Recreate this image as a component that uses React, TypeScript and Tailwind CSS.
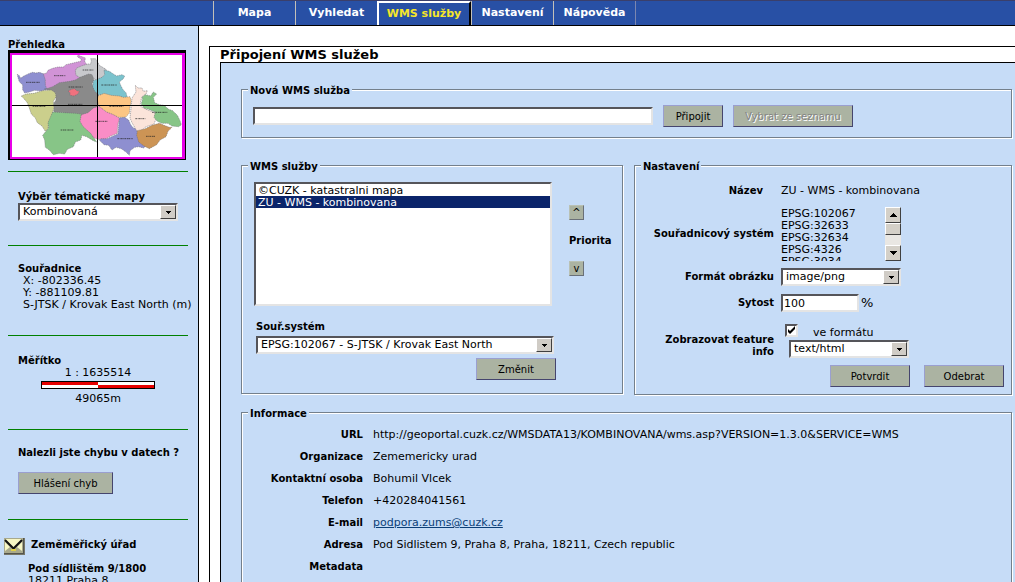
import { useState } from "react";
import type { ReactNode } from "react";
import { clsx } from "clsx";

const TABS = ["Mapa", "Vyhledat", "WMS služby", "Nastavení", "Nápověda"];

const SERVICES = ["©CUZK - katastralni mapa", "ZU - WMS - kombinovana"];

const SYSTEMS = [
  "EPSG:102067",
  "EPSG:32633",
  "EPSG:32634",
  "EPSG:4326",
  "EPSG:3034",
];

const INFO: { label: string; value: string; href?: string }[] = [
  {
    label: "URL",
    value:
      "http://geoportal.cuzk.cz/WMSDATA13/KOMBINOVANA/wms.asp?VERSION=1.3.0&SERVICE=WMS",
  },
  { label: "Organizace", value: "Zememericky urad" },
  { label: "Kontaktní osoba", value: "Bohumil Vlcek" },
  { label: "Telefon", value: "+420284041561" },
  {
    label: "E-mail",
    value: "podpora.zums@cuzk.cz",
    href: "mailto:podpora.zums@cuzk.cz",
  },
  {
    label: "Adresa",
    value: "Pod Sidlistem 9, Praha 8, Praha, 18211, Czech republic",
  },
  { label: "Metadata", value: "" },
];

const REGIONS = [
  { fill: "#8e8fd0", d: "M52 133l6 4 4 8 8-6 16-8 12-4 10 2 10-2 16 6 8 6-6 16 4 10 4 12-20 6-20-2-16 5-14 3-6-10 0-14-10-10-4-12z" },
  { fill: "#d193d6", d: "M130 132l10-3 4-8 14-6 16-4 16 0 8-7 18-4 16-4 10-2 2-6-12-8 2-4 12 4 10 4-2 12 6 6-4 8-14 12-4 12 2 12-8 8-18 4-18 0-16 10-12 2-12 7-14 3-6-14 0-16z" },
  { fill: "#c8c9cc", d: "M230 114l14-6 18-6 10 0 2-10-2-6 14 0 6 8 6 12 10 6 10 6 4 14-2 12-14 4-16 4-8-6-8-12-14 4-18 6-14-8-2-14z" },
  { fill: "#8a8a8a", d: "M134 178l24-8 20-12 32-4 16-4 14-8 26-10 10 2 6 16-6 12 8 14 10 8 2 14-2 30-10 10-2 12-18 0-18 6-26-4-32-4-26 0-2-26 8-12-2-18-8-8-24-8z" },
  { fill: "#7bc3cd", d: "M280 152l26-10 8-8-2-14 16 4 12 8 10 6 16-4 8 4-4 8-12 10 4 10 6 12 10 10 4 16-8 2-12-6-24 0-22-6-20 0-12-10-6-14z" },
  { fill: "#cbcf8c", d: "M64 198l14-6 24-2 26-8 26-2 12 8 2 12-8 14 2 20-4 12-2 22-10 12-2 16-8 8-10-16-14-10-6-14-12-12-6-18-6-16-10-12z" },
  { fill: "#87c587", d: "M158 246l34 2 34 2 18 2 0 16 4 14 14 10 10 14 10 18 8 12-10-4-20-12-14-4-4 14-16 6-6 14-18 8-8 14-16-2-18 4-12-14-12-8-2-22-6-14 18-22-2-16z" },
  { fill: "#fa8dc6", d: "M244 254l20-6 16-14 18-6 16 14 32 14 14 10-6 14-2 18 0 12-20 8-16 10-20 0-14-4-10-14-14-12-10-10-8-14z" },
  { fill: "#fcc684", d: "M294 198l18-8 22 6 24 2 12 4 20-2 4 14-4 16-2 20-12 12-20 0-20-10-16-6-24-18-4-18z" },
  { fill: "#8e8fd0", d: "M358 264l16-2 12 8 6 14 8 10 12 4 2 20 6 12 10 8 12 8-12 8-14-4-12 2-14 10-2 14-10-10-14-10-16-4-12 8-10-14-14-2-14-14 6-4 18 0 18-8 14-6 2-24z" },
  { fill: "#fbe4da", d: "M406 166l8 8 12 0 4 10 12-2-4 10-12 8-4 14-2 14 18 10 16 6 12 6 2 16-6 16-24 8-16 14-10 2-8-14-8-14-6-14 2-18 2-22 2-20 12-18z" },
  { fill: "#87c587", d: "M426 202l10-8 16 4 8-12 10 6-10 10 4 16 14 6 14 2 14 12 12 4 14 14 8 16 4 12-8 6-20-2-12-8-18 0-14-6-10-12 4-16-20-8-14-4-8-12 4-16z" },
  { fill: "#cc9455", d: "M412 302l24-6 20-10 22-6 14 6 16 6 8 0-12 12-6 16-18 10-10 14-22 12-16-8-16-12-6-20z" },
  { fill: "#f0717e", d: "M204 184l10-6 10-2 6 6 8 2-4 8-12 6-12-2 0-8z" },
];

// caption strips of the map regions: x, y, length
const CAPTIONS = [
  [78, 157, 42],
  [162, 137, 34],
  [248, 120, 32],
  [206, 171, 42],
  [204, 223, 44],
  [304, 165, 46],
  [98, 229, 38],
  [182, 300, 38],
  [286, 274, 36],
  [328, 229, 42],
  [352, 326, 46],
  [406, 266, 30],
  [456, 247, 46],
  [438, 319, 28],
];

const OverviewMap = () => {
  return (
    <svg
      width="178"
      height="110"
      viewBox="24 60 534 330"
      className="block"
      role="img"
      aria-label="Přehledka"
    >
      <rect x="24" y="60" width="534" height="330" fill="#000" />
      <rect x="30" y="69" width="525" height="318" fill="#e800e8" />
      <rect x="36" y="75" width="510" height="306" fill="#fff" />
      {REGIONS.map((region, index) => (
        <path
          key={index}
          d={region.d}
          fill={region.fill}
          stroke="#6b6b70"
          strokeWidth="1.5"
          strokeDasharray="4 2"
        />
      ))}
      {CAPTIONS.map(([x, y, length]) => (
        <path
          key={`${x}-${y}`}
          d={`M${x} ${y}h${length}`}
          stroke="#222"
          strokeOpacity="0.7"
          strokeWidth="3"
          strokeDasharray="5 2 3 1"
        />
      ))}
      <path d="M292.5 75v306M36 226.5h510" stroke="#000" strokeWidth="3" />
    </svg>
  );
};

const Button = ({
  children,
  className,
  disabled,
}: {
  children: ReactNode;
  className?: string;
  disabled?: boolean;
}) => {
  return (
    <button
      type="button"
      disabled={disabled}
      className={clsx(
        "h-[22px] shrink-0 border border-t-[#9a9fd0] border-r-[#45456e] border-b-[#45456e] border-l-[#9a9fd0] bg-[#abb3a2] pt-px text-center text-[10px] leading-[12px] whitespace-nowrap",
        disabled && "text-[#848484] [text-shadow:1px_1px_0_#fff]",
        className
      )}
    >
      {children}
    </button>
  );
};

const Dropdown = ({
  id,
  value,
  className,
}: {
  id: string;
  value: string;
  className?: string;
}) => {
  return (
    <div
      className={clsx(
        "relative h-[18px] border-2 border-t-[#55555a] border-r-[#e4e4e4] border-b-[#e4e4e4] border-l-[#55555a] bg-white",
        className
      )}
    >
      <select
        id={id}
        className="block h-[14px] w-full appearance-none bg-transparent pl-[3px] text-[11px] leading-[14px] outline-none"
      >
        <option>{value}</option>
      </select>
      <span className="pointer-events-none absolute top-0 right-0 flex h-[14px] w-4 items-center justify-center border border-t-white border-r-[#404040] border-b-[#404040] border-l-white bg-[#d0ccc6]">
        <svg width="5" height="3" viewBox="0 0 5 3" aria-hidden="true">
          <path d="M0 0h5v1H0zM1 1h3v1H1zM2 2h1v1H2z" fill="#000" />
        </svg>
      </span>
    </div>
  );
};

const Group = ({
  title,
  className,
  children,
}: {
  title: string;
  className?: string;
  children: ReactNode;
}) => {
  return (
    <fieldset
      className={clsx(
        "min-w-0 border border-[#74808c] shadow-[1px_1px_0_#fff,inset_1px_1px_0_#fff]",
        className
      )}
    >
      <legend className="ml-[6px] bg-[#c6dcf7] px-[2px] pt-1 text-[10px] leading-[10px] font-bold">
        {title}
      </legend>
      {children}
    </fieldset>
  );
};

const ScrollButton = ({ up }: { up?: boolean }) => {
  return (
    <button
      type="button"
      aria-label={up ? "Nahoru" : "Dolů"}
      className="flex h-4 w-4 items-center justify-center border border-t-white border-r-[#404040] border-b-[#404040] border-l-white bg-[#d4d0c8]"
    >
      <svg width="7" height="4" viewBox="0 0 7 4" aria-hidden="true">
        <path
          d={
            up
              ? "M3 0h1v1H3zM2 1h3v1H2zM1 2h5v1H1zM0 3h7v1H0z"
              : "M0 0h7v1H0zM1 1h5v1H1zM2 2h3v1H2zM3 3h1v1H3z"
          }
          fill="#000"
        />
      </svg>
    </button>
  );
};

const Sidebar = () => {
  return (
    <aside className="w-[199px] shrink-0 overflow-hidden border-r border-black bg-[#c6dcf7] pt-[13px] pr-[10px] pl-2 leading-[12px] whitespace-nowrap">
      <h2 className="text-[10px] leading-[11px] font-bold">Přehledka</h2>
      <OverviewMap />

      <section className="mt-[11px] border-t border-t-[#008000] px-[10px] pt-[19px] pb-6">
        <label htmlFor="theme" className="block text-[10px] font-bold">
          Výběr tématické mapy
        </label>
        <Dropdown id="theme" value="Kombinovaná" />
      </section>

      <section className="border-t border-t-[#008000] pt-[17px] pb-6 pl-[10px]">
        <h2 className="text-[10px] font-bold">Souřadnice</h2>
        <div className="pl-[5px]">
          <p>X: -802336.45</p>
          <p>Y: -881109.81</p>
          <p>S-JTSK / Krovak East North (m)</p>
        </div>
      </section>

      <section className="border-t border-t-[#008000] px-[10px] pt-[19px] pb-6">
        <h2 className="text-[10px] font-bold">Měřítko</h2>
        <p className="text-center">1 : 1635514</p>
        <div className="mx-auto mt-[2px] mb-1 grid h-2 w-[114px] grid-cols-2 border border-black bg-white">
          <span className="mb-[3px] bg-[#e60000]" />
          <span className="mt-[3px] bg-[#e60000]" />
        </div>
        <p className="text-center">49065m</p>
      </section>

      <section className="border-t border-t-[#008000] px-[10px] pt-[17px] pb-[25px]">
        <h2 className="mb-[13px] text-[10px] font-bold">
          Nalezli jste chybu v datech ?
        </h2>
        <Button className="block w-[95px]">Hlášení chyb</Button>
      </section>

      <section className="border-t border-t-[#008000] pt-[18px]">
        <div className="-ml-1 flex gap-[6px]">
          <svg width="21" height="17" viewBox="0 0 21 17" aria-hidden="true">
            <rect width="21" height="17" fill="#77776a" />
            <rect width="19" height="15" fill="#a9a98c" />
            <path d="M1 1h17l-8 9zM1 4l5 5-5 4zM18 4l-5 5 5 4z" fill="#f7f6c4" />
            <path d="M1 2l8 8h1l8-8" fill="none" stroke="#111" strokeWidth="2" />
            <path d="M7 12h5" stroke="#e0d048" strokeWidth="2" />
            <path d="M0 15.500h20M19.500 0v16" stroke="#55554c" />
          </svg>
          <h2 className="pt-px text-[10px] font-bold">Zeměměřický úřad</h2>
        </div>
        <address className="mt-2 pl-5 not-italic">
          <strong className="block text-[10px]">Pod sídlištěm 9/1800</strong>
          18211 Praha 8
        </address>
      </section>
    </aside>
  );
};

const PriorityButton = ({
  label,
  children,
}: {
  label: string;
  children: ReactNode;
}) => {
  return (
    <button
      type="button"
      aria-label={label}
      className="h-[15px] w-[15px] border border-t-[#b9c1b4] border-r-[#6a7078] border-b-[#6a7078] border-l-[#b9c1b4] bg-[#abb3a2] text-center text-[10px] leading-[13px]"
    >
      {children}
    </button>
  );
};

const ServiceList = () => {
  const [selected, setSelected] = useState(SERVICES[1]);

  return (
    <Group title="WMS služby" className="w-[382px] shrink-0">
      <div className="pt-[10px] pb-[13px] pl-3">
        <div className="flex">
          <select
            size={10}
            aria-label="WMS služby"
            value={selected}
            onChange={(e) => setSelected(e.target.value)}
            className="h-[124px] w-[298px] overflow-hidden border-2 border-t-[#55555a] border-r-[#e4e4e4] border-b-[#e4e4e4] border-l-[#55555a] bg-white text-[11px] outline-none"
          >
            {SERVICES.map((service) => (
              <option
                key={service}
                value={service}
                className="h-3 min-h-0 p-0 pl-[2px] leading-[12px] checked:bg-linear-to-r checked:from-[#0a246a] checked:to-[#0a246a] checked:[-webkit-text-fill-color:#fff]"
              >
                {service}
              </option>
            ))}
          </select>
          <div className="flex flex-col items-start gap-[14px] pt-[23px] pl-[17px]">
            <PriorityButton label="Zvýšit prioritu">^</PriorityButton>
            <span className="text-[10px] leading-[13px] font-bold">
              Priorita
            </span>
            <PriorityButton label="Snížit prioritu">v</PriorityButton>
          </div>
        </div>
        <div className="flex w-[302px] flex-col pt-[15px] pl-[2px]">
          <label
            htmlFor="srs"
            className="mb-[3px] text-[10px] leading-[12px] font-bold"
          >
            Souř.systém
          </label>
          <Dropdown
            id="srs"
            value="EPSG:102067 - S-JTSK / Krovak East North"
            className="w-[298px]"
          />
          <Button className="mt-1 w-20 self-end">Změnit</Button>
        </div>
      </div>
    </Group>
  );
};

const ServiceSettings = () => {
  const [saturation, setSaturation] = useState("100");
  const [featureInfo, setFeatureInfo] = useState(true);

  return (
    <Group title="Nastavení" className="flex-1">
      <div className="grid grid-cols-[139px_1fr] gap-x-[7px] pt-[13px] leading-[12px]">
        <span className="pr-[11px] text-right text-[10px] font-bold">
          Název
        </span>
        <span>ZU - WMS - kombinovana</span>

        <span className="mt-[10px] self-center text-right text-[10px] font-bold whitespace-nowrap">
          Souřadnicový systém
        </span>
        <div className="mt-[10px] flex h-[54px] w-[120px] justify-between overflow-hidden">
          <ul className="pt-px">
            {SYSTEMS.map((system) => (
              <li key={system}>{system}</li>
            ))}
          </ul>
          <div className="flex w-4 flex-col bg-[#e9e7e3]">
            <ScrollButton up />
            <span className="mb-auto h-3 border border-t-white border-r-[#404040] border-b-[#404040] border-l-white bg-[#d4d0c8]" />
            <ScrollButton />
          </div>
        </div>

        <label
          htmlFor="format"
          className="mt-[7px] self-center text-right text-[10px] font-bold"
        >
          Formát obrázku
        </label>
        <Dropdown id="format" value="image/png" className="mt-[7px] w-[120px]" />

        <label
          htmlFor="saturation"
          className="mt-2 self-center text-right text-[10px] font-bold"
        >
          Sytost
        </label>
        <div className="mt-2 flex items-center gap-[2px]">
          <input
            id="saturation"
            type="text"
            value={saturation}
            onChange={(e) => setSaturation(e.target.value)}
            className="h-[18px] w-[78px] border-2 border-t-[#55555a] border-r-[#e4e4e4] border-b-[#e4e4e4] border-l-[#55555a] bg-white pl-px text-[11px] outline-none"
          />
          <span className="text-[13px]">%</span>
        </div>

        <label
          htmlFor="feature-info"
          className="mt-[22px] self-start pl-5 text-right text-[10px] font-bold"
        >
          Zobrazovat feature info
        </label>
        <div className="mt-3">
          <div className="flex h-4 pl-1">
            <span className="relative block h-[13px] w-[13px]">
              <input
                id="feature-info"
                type="checkbox"
                checked={featureInfo}
                onChange={(e) => setFeatureInfo(e.target.checked)}
                className="block h-[13px] w-[13px] appearance-none border-2 border-t-[#55555a] border-r-[#e4e4e4] border-b-[#e4e4e4] border-l-[#55555a] bg-white"
              />
              {featureInfo && (
                <svg
                  viewBox="0 0 13 13"
                  className="pointer-events-none absolute inset-0"
                  aria-hidden="true"
                >
                  <path d="M3 5v3l2 2 5-5V2L5 7z" fill="#000" />
                </svg>
              )}
            </span>
            <label htmlFor="info-format" className="pt-[3px] pl-[15px]">
              ve formátu
            </label>
          </div>
          <Dropdown
            id="info-format"
            value="text/html"
            className="ml-2 w-[120px]"
          />
        </div>
      </div>
      <div className="flex justify-end gap-[14px] pt-[7px] pr-[7px] pb-[7px]">
        <Button className="w-20">Potvrdit</Button>
        <Button className="w-20">Odebrat</Button>
      </div>
    </Group>
  );
};

export default function App() {
  return (
    <div className="flex h-screen flex-col overflow-hidden bg-white font-['Verdana','DejaVu_Sans',sans-serif] text-[11px] text-black">
      <nav className="flex h-[26px] shrink-0 border-t border-b border-t-[#3a3f6b] border-b-black bg-[#2850a5] pl-[213px]">
        {TABS.map((tab) => (
          <a
            key={tab}
            href="#"
            className={clsx(
              "flex items-center justify-center text-[11px] font-bold",
              tab === "WMS služby"
                ? "w-[94px] border-t-2 border-r-2 border-l-2 border-t-white border-r-black border-l-white text-[#f5e629]"
                : "w-[82px] border-l border-l-[#c3c0b8] text-white"
            )}
          >
            {tab}
          </a>
        ))}
        <span className="border-l border-l-[#7b86b0]" />
      </nav>

      <div className="flex min-h-0 flex-1">
        <Sidebar />

        <main className="flex min-w-0 flex-1 pt-5 pl-[10px]">
          <div className="flex min-w-0 flex-1 flex-col border-t border-l border-black pl-[10px]">
            <h1 className="pt-px text-[13px] leading-[14px] font-bold">
              Připojení WMS služeb
            </h1>
            <div className="min-h-0 flex-1 overflow-hidden border-t border-l border-black bg-[#c6dcf7] pt-[19px] pr-[3px] pl-5">
              <Group title="Nová WMS služba">
                <div className="flex items-center gap-[10px] pt-[9px] pb-[10px] pl-[11px]">
                  <input
                    type="text"
                    aria-label="Nová WMS služba"
                    className="h-[18px] w-[400px] border-2 border-t-[#55555a] border-r-[#e4e4e4] border-b-[#e4e4e4] border-l-[#55555a] bg-white outline-none"
                  />
                  <Button className="w-[60px]">Připojit</Button>
                  <Button className="w-[120px]" disabled>
                    Vybrat ze seznamu
                  </Button>
                </div>
              </Group>

              <div className="mt-5 flex items-start gap-[11px]">
                <ServiceList />
                <ServiceSettings />
              </div>

              <Group title="Informace" className="mt-[10px]">
                <dl className="grid grid-cols-[121px_1fr] gap-x-[10px] pt-[5px] pb-8 leading-[22px]">
                  {INFO.map(({ label, value, href }) => (
                    <div key={label} className="contents">
                      <dt className="text-right text-[10px] font-bold">
                        {label}
                      </dt>
                      <dd>
                        {href ? (
                          <a href={href} className="text-[#0b3f77] underline">
                            {value}
                          </a>
                        ) : (
                          value
                        )}
                      </dd>
                    </div>
                  ))}
                </dl>
              </Group>
            </div>
          </div>
        </main>
      </div>
    </div>
  );
}
